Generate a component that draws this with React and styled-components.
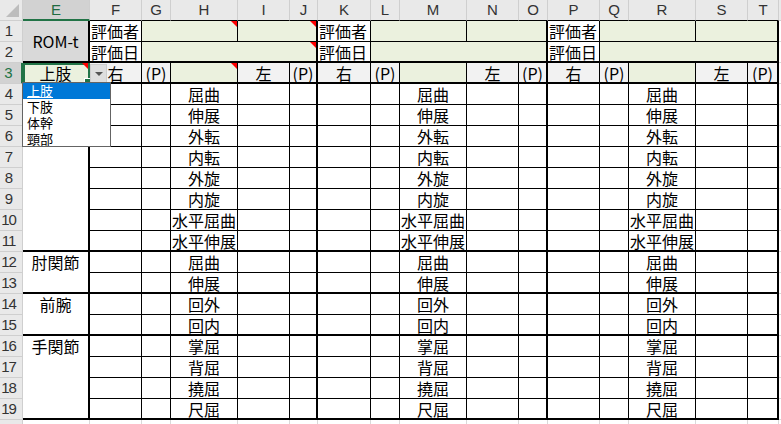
import React from "react";
import styled, { createGlobalStyle, css } from "styled-components";

const GlobalStyle = createGlobalStyle`
  html, body {
    margin: 0;
    padding: 0;
    background: #fff;
    overflow: hidden;
  }
  body {
    font-family: "Noto Sans CJK JP", "Noto Sans", sans-serif;
  }
`;

// column pitches: row header, E ... T, U (cut off)
const COLS = [23, 67, 52, 29, 67, 52, 28, 53, 29, 67, 52, 29, 52, 29, 67, 52, 31, 64];
const LETTERS = "EFGHIJKLMNOPQRSTU".split("");

const GREEN = "#ebf1de";
const GRAY = "#f2f2f2";
const SELECT = "#217346";

const EDGE = {
  none: "none",
  grid: "1px solid #d9d9d9",
  head: "1px solid #cfcfcf",
  thin: "1px solid #000",
  thick: "2px solid #000",
  sel: `2px solid ${SELECT}`,
};

const ITEMS = [
  "屈曲", "伸展", "外転", "内転", "外旋", "内旋", "水平屈曲", "水平伸展",
  "屈曲", "伸展", "回外", "回内", "掌屈", "背屈", "撓屈", "尺屈",
];
const THICK_ROWS = [11, 13, 15, 19];

const Sheet = styled.div`
  display: grid;
  grid-template-columns: ${COLS.map((w) => `${w}px`).join(" ")};
  grid-auto-rows: 21px;
  width: 781px;
  height: 424px;
  overflow: hidden;
`;

const Corner = styled.div`
  box-sizing: border-box;
  background: #e9e9e9;
  border-right: ${EDGE.head};
  border-bottom: ${EDGE.head};
  display: flex;
  align-items: flex-end;
  justify-content: flex-end;
  padding: 0 3px 3px 0;
`;

const ColHead = styled.div`
  box-sizing: border-box;
  display: flex;
  align-items: center;
  justify-content: center;
  background: ${(p) => (p.$active ? "#d2d2d2" : "#e9e9e9")};
  color: ${(p) => (p.$active ? "#1e6b41" : "#333")};
  border-right: ${EDGE.head};
  border-bottom: ${(p) => EDGE[p.$b || "head"]};
  font-family: "Liberation Sans", Arial, sans-serif;
  font-size: 15px;
  line-height: 20px;
`;

const RowHead = styled.div`
  box-sizing: border-box;
  display: flex;
  align-items: center;
  justify-content: center;
  padding-right: 5px;
  background: ${(p) => (p.$active ? "#d2d2d2" : "#e9e9e9")};
  color: ${(p) => (p.$active ? SELECT : "#333")};
  border-right: ${(p) => (p.$active ? EDGE.sel : EDGE.head)};
  border-bottom: ${EDGE.head};
  font-family: "Liberation Sans", Arial, sans-serif;
  font-size: 15px;
  letter-spacing: -1px;
  line-height: 20px;
`;

const Cell = styled.div`
  box-sizing: border-box;
  position: relative;
  grid-column: span ${(p) => p.$span || 1};
  grid-row: span ${(p) => p.$rows || 1};
  display: flex;
  align-items: ${(p) => (p.$top ? "flex-start" : "center")};
  justify-content: ${(p) => (p.$left ? "flex-start" : "center")};
  padding: ${(p) => (p.$left ? "0 0 0 1px" : "0")};
  background: ${(p) => p.$bg || "#fff"};
  border-right: ${(p) => EDGE[p.$r || "grid"]};
  border-bottom: ${(p) => EDGE[p.$b || "grid"]};
  font-size: 16px;
  line-height: 20px;
  color: #000;
  white-space: nowrap;

  ${(p) =>
    p.$mark &&
    css`
      &::after {
        content: "";
        position: absolute;
        top: 0;
        right: 0;
        width: 0;
        height: 0;
        border-top: 6px solid #ff0000;
        border-left: 6px solid transparent;
      }
    `}
`;

const ActiveCell = styled(Cell)`
  z-index: 3;
  outline: 2px solid ${SELECT};
  outline-offset: -2px;
`;

const FillHandle = styled.span`
  position: absolute;
  right: -3px;
  bottom: -3px;
  width: 5px;
  height: 5px;
  background: ${SELECT};
  border: 1px solid #fff;
`;

const DropButton = styled.span`
  position: absolute;
  left: calc(100% + 2px);
  top: 1px;
  width: 17px;
  height: 19px;
  box-sizing: border-box;
  background: #dedede;
  border: 1px solid #cdcdcd;
  display: flex;
  align-items: center;
  justify-content: center;
`;

const Arrow = styled.span`
  width: 0;
  height: 0;
  border-left: 4px solid transparent;
  border-right: 4px solid transparent;
  border-top: 4px solid #555;
`;

const List = styled.ul`
  position: absolute;
  left: -1px;
  top: 100%;
  width: 89px;
  height: 65px;
  margin: 0;
  padding: 0;
  box-sizing: border-box;
  list-style: none;
  background: #fff;
  border: 1px solid #646464;
`;

const Option = styled.li`
  height: 16px;
  padding-left: 4px;
  font-size: 13px;
  line-height: 16px;
  text-align: left;
  color: ${(p) => (p.$selected ? "#fff" : "#000")};
  background: ${(p) => (p.$selected ? "#0078d7" : "transparent")};
  text-decoration: ${(p) => (p.$selected ? "underline" : "none")};
`;

function HeaderRow() {
  return (
    <>
      <Corner>
        <svg width="13" height="13" viewBox="0 0 13 13">
          <polygon points="13,0 13,13 0,13" fill="#bdbdbd" />
        </svg>
      </Corner>
      {LETTERS.map((l) => (
        <ColHead
          key={l}
          $active={l === "E"}
          $b={l === "E" ? "sel" : l === "U" ? "head" : "thin"}
        >
          {l}
        </ColHead>
      ))}
    </>
  );
}

function GroupCells({ row, marks }) {
  if (row === 1) {
    return (
      <>
        <Cell $left $r="thin" $b="thin">評価者</Cell>
        <Cell $span={2} $bg={GREEN} $r="thin" $b="thin" $mark={marks} />
        <Cell $span={2} $bg={GREEN} $r="thick" $b="thin" $mark={marks} />
      </>
    );
  }
  if (row === 2) {
    return (
      <>
        <Cell $left $r="thin" $b="thick">評価日</Cell>
        <Cell $span={4} $bg={GREEN} $r="thick" $b="thick" $mark={marks} />
      </>
    );
  }
  if (row === 3) {
    return (
      <>
        <Cell $bg={GRAY} $r="thin" $b="thick">右</Cell>
        <Cell $bg={GRAY} $r="thin" $b="thick">(P)</Cell>
        <Cell $bg={GREEN} $r="thin" $b="thick" $mark={marks} />
        <Cell $bg={GRAY} $r="thin" $b="thick">左</Cell>
        <Cell $bg={GRAY} $r="thick" $b="thick">(P)</Cell>
      </>
    );
  }
  const b = THICK_ROWS.includes(row) ? "thick" : "thin";
  return (
    <>
      <Cell $r="thin" $b={b} />
      <Cell $r="thin" $b={b} />
      <Cell $r="thin" $b={b}>{ITEMS[row - 4]}</Cell>
      <Cell $r="thin" $b={b} />
      <Cell $r="thick" $b={b} />
    </>
  );
}

const E_CELLS = {
  1: <Cell $rows={2} $bg="#d9d9d9" $r="thick" $b="thick">ROM-t</Cell>,
  4: <Cell $rows={8} $r="thick" $b="thick" />,
  12: <Cell $rows={2} $top $r="thick" $b="thick">肘関節</Cell>,
  14: <Cell $rows={2} $top $r="thick" $b="thick">前腕</Cell>,
  16: <Cell $rows={4} $top $r="thick" $b="thick">手関節</Cell>,
};

function Dropdown() {
  return (
    <>
      <DropButton>
        <Arrow />
      </DropButton>
      <List>
        <Option $selected>上肢</Option>
        <Option>下肢</Option>
        <Option>体幹</Option>
        <Option>頸部</Option>
      </List>
    </>
  );
}

function SheetRow({ row }) {
  return (
    <>
      <RowHead $active={row === 3}>{row}</RowHead>
      {row === 3 ? (
        <ActiveCell $bg={GREEN} $r="thick" $b="thick" $mark>
          上肢
          <FillHandle />
          <Dropdown />
        </ActiveCell>
      ) : (
        E_CELLS[row] || null
      )}
      {[true, false, false].map((marks, i) => (
        <GroupCells key={i} row={row} marks={marks} />
      ))}
      <Cell />
    </>
  );
}

export default function App() {
  const rows = Array.from({ length: 19 }, (_, i) => i + 1);
  return (
    <>
      <GlobalStyle />
      <Sheet>
        <HeaderRow />
        {rows.map((r) => (
          <SheetRow key={r} row={r} />
        ))}
        <RowHead>20</RowHead>
        {LETTERS.map((l) => (
          <Cell key={l} />
        ))}
      </Sheet>
    </>
  );
}
